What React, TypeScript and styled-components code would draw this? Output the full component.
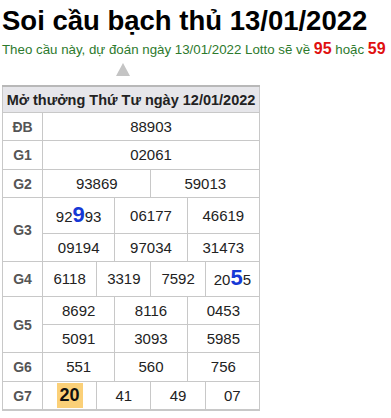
import React from "react";
import styled, { createGlobalStyle } from "styled-components";

const Global = createGlobalStyle`
  html, body { margin: 0; padding: 0; background: #fff; }
  body { font-family: Arial, "Liberation Sans", sans-serif; }
`;

const Page = styled.div`
  padding: 0 2px;
  font-family: Arial, "Liberation Sans", sans-serif;
`;

const Title = styled.h1`
  margin: 0;
  padding-top: 4px;
  font-size: 27.5px;
  line-height: 34px;
  font-weight: bold;
  color: #000;
  white-space: nowrap;
`;

const Sub = styled.p`
  margin: 0;
  margin-top: 1px;
  font-size: 13.3px;
  line-height: 20px;
  color: #2d7a2d;
  white-space: nowrap;
`;

const Red = styled.b`
  color: #e01010;
  font-size: 16px;
`;

const Arrow = styled.div`
  width: 0;
  height: 0;
  margin: 3px 0 9px 114px;
  border-left: 7px solid transparent;
  border-right: 7px solid transparent;
  border-bottom: 13px solid #c4c4c4;
`;

const Table = styled.table`
  width: 258px;
  border-collapse: collapse;
  table-layout: fixed;
  border-top: 2px solid #b8b8b8;
  border-bottom: 2px solid #c8c8c8;
`;

const Head = styled.th`
  background: #e6e6ea;
  color: #222;
  font-size: 14.5px;
  font-weight: bold;
  height: 25px;
  padding: 0;
  border: 1px solid #c8c8c8;
  white-space: nowrap;
`;

const Label = styled.td`
  font-size: 14px;
  font-weight: bold;
  color: #555;
  text-align: center;
  border: 1px solid #c8c8c8;
  padding: 0;
`;

const Cell = styled.td<{ $h?: number }>`
  font-size: 15px;
  line-height: 18px;
  color: #222;
  text-align: center;
  border: 1px solid #c8c8c8;
  padding: 0;
  height: ${(p) => p.$h ?? 27}px;
`;

const Big = styled.b`
  color: #1638d6;
  font-size: 22px;
  line-height: 18px;
`;

const Mark = styled.b`
  display: inline-block;
  background: #fbd078;
  color: #111;
  font-size: 18px;
  line-height: 25px;
  padding: 0 3px;
`;

type Row = { label: string; rows: React.ReactNode[][]; h?: number[] };

const data: Row[] = [
  { label: "ĐB", rows: [["88903"]] },
  { label: "G1", rows: [["02061"]], h: [28] },
  { label: "G2", rows: [["93869", "59013"]] },
  {
    label: "G3",
    rows: [
      [<>92<Big>9</Big>93</>, "06177", "46619"],
      ["09194", "97034", "31473"],
    ],
    h: [35, 27],
  },
  { label: "G4", rows: [["6118", "3319", "7592", <>20<Big>5</Big>5</>]], h: [34] },
  { label: "G5", rows: [["8692", "8116", "0453"], ["5091", "3093", "5985"]] },
  { label: "G6", rows: [["551", "560", "756"]], h: [28] },
  { label: "G7", rows: [[<Mark>20</Mark>, "41", "49", "07"]] },
];

export default function App() {
  return (
    <Page>
      <Global />
      <Title>Soi cầu bạch thủ 13/01/2022</Title>
      <Sub>
        Theo cầu này, dự đoán ngày 13/01/2022 Lotto sẽ về <Red>95</Red> hoặc <Red>59</Red>
      </Sub>
      <Arrow />
      <Table>
        <colgroup>
          <col style={{ width: 40 }} />
          {Array.from({ length: 12 }).map((_, i) => (
            <col key={i} />
          ))}
        </colgroup>
        <thead>
          <tr>
            <Head colSpan={13}>Mở thưởng Thứ Tư ngày 12/01/2022</Head>
          </tr>
        </thead>
        <tbody>
          {data.map((r) =>
            r.rows.map((cells, i) => (
              <tr key={r.label + i}>
                {i === 0 && <Label rowSpan={r.rows.length}>{r.label}</Label>}
                {cells.map((c, j) => (
                  <Cell key={j} colSpan={12 / cells.length} $h={r.h?.[i]}>
                    {c}
                  </Cell>
                ))}
              </tr>
            ))
          )}
        </tbody>
      </Table>
    </Page>
  );
}
